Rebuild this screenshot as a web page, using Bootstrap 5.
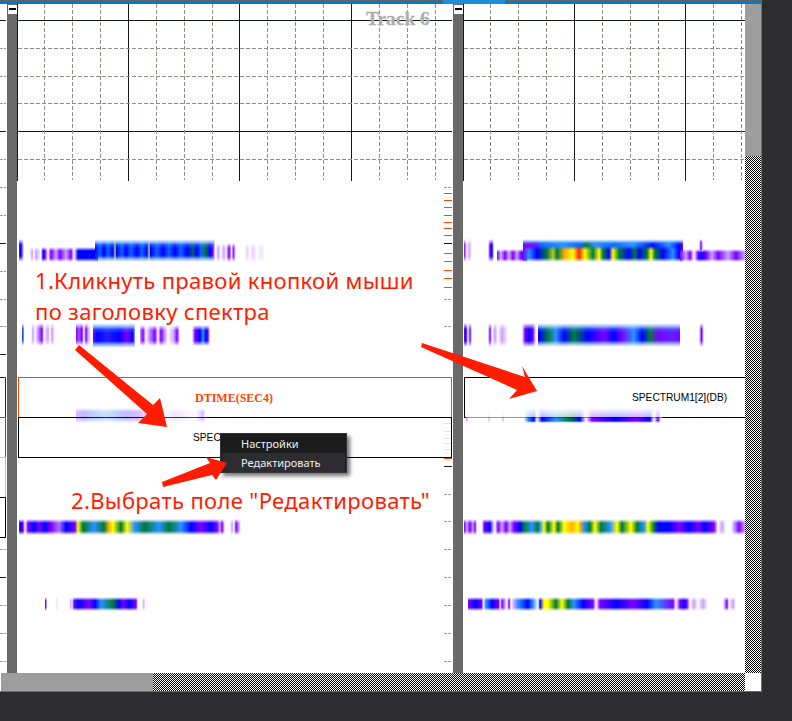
<!DOCTYPE html>
<html lang="en">
<head>
    <meta charset="UTF-8">
    <meta name="viewport" content="width=device-width, initial-scale=1.0">
    <title>Track 6</title>
    <link href="https://cdn.jsdelivr.net/npm/bootstrap@5.3.0/dist/css/bootstrap.min.css" rel="stylesheet">
    <style>
        :root {
            --p: #7a00ff;
            --b: #0000ff;
            --c: #2a90ff;
            --g: #007a3a;
            --y: #ffff00;
            --o: #ffb000;
            --l: #c9a0ff;
        }
        body {
            background: #2d2d30;
            margin: 0;
            min-height: 100vh;
            overflow: hidden;
        }
        .app-window {
            width: 762px;
            height: 692px;
            background: #fff;
            border-right: 1px solid #6d6d70;
            border-bottom: 1px solid #6d6d70;
        }
        .top-strip {
            height: 4px;
            border-top: 1px solid #5f6468;
            background: #007acc;
        }
        .top-strip-tab {
            margin-left: 443px;
            margin-top: -1px;
            width: 62px;
            height: 4px;
            background: #1c8fdc;
        }
        .work-row { height: 669px; }
        .edge-strip { width: 7px; }
        .splitter {
            width: 10px;
            background: #696969;
        }
        .collapse-btn {
            width: 9px;
            height: 9px;
            margin: 1px 0 0 1px;
            background: #fff;
            padding: 3px 1px;
        }
        .collapse-btn span {
            display: block;
            height: 2px;
            background: #000;
        }
        .pane-one { width: 436px; }
        .pane-two { width: 282px; }
        .canvas-svg {
            position: absolute;
            left: 0;
            top: 0;
            display: block;
        }
        .line-solid { stroke: #141a14; stroke-width: 1; fill: none; shape-rendering: crispEdges; }
        .line-dash { stroke: #8b908b; stroke-width: 1; fill: none; stroke-dasharray: 4 2; shape-rendering: crispEdges; }
        .line-tick { stroke: #9a9a9a; stroke-width: 1; fill: none; stroke-dasharray: 3 1; shape-rendering: crispEdges; }
        .line-red { stroke: #ff4500; stroke-width: 1; fill: none; shape-rendering: crispEdges; }
        .line-pale { stroke: #ffd8c8; stroke-width: 1; fill: none; shape-rendering: crispEdges; }
        .track-title {
            position: absolute;
            left: 349px;
            top: 3px;
            font: bold 19.4px/24px "Liberation Serif", serif;
            color: #aeaeae;
            -webkit-text-stroke: .3px #aeaeae;
        }
        /* spectrum bands: position on the plot is the content itself */
        .band {
            position: absolute;
            -webkit-mask-image: linear-gradient(180deg, transparent, #000 26%, #000 74%, transparent);
            mask-image: linear-gradient(180deg, transparent, #000 26%, #000 74%, transparent);
        }
        .band-edge::after {
            content: "";
            position: absolute;
            inset: 0;
            background: linear-gradient(180deg, rgba(70, 170, 255, .9), rgba(70, 170, 255, 0) 42%, rgba(70, 170, 255, 0) 68%, rgba(70, 170, 255, .75));
        }
        .header-stack { padding-top: 373px; position: relative; }
        .spec-head {
            height: 41px;
            margin-bottom: -1px;
            background: transparent;
            border: 1px solid #000;
            font: 10.2px/1 "Liberation Sans", sans-serif;
            color: #000;
            padding-top: 1px;
        }
        .pane-one .spec-head { margin-left: 1px; margin-right: 1px; }
        .pane-two .spec-head { margin-left: 1px; border-right: 0; padding-left: 167px; }
        .spec-head-active {
            border-color: #ff4500;
            border-bottom-color: #000;
            color: #ff4500;
            font: bold 12px/1 "Liberation Serif", serif;
            padding-right: 2px;
        }
        .spec-head-plain { padding-left: 174px; }
        .scroll-thumb { background: #9e9e9e; }
        .scroll-track {
            background: repeating-conic-gradient(#000 0 25%, #fff 0 50%) 0 0 / 2px 2px;
        }
        .v-scroll { width: 16px; }
        .v-thumb { height: 152px; }
        .h-scroll { height: 18px; }
        .h-thumb { width: 152px; margin-left: 1px; }
        .scroll-corner { width: 16px; background: #fff; }
        .hint-text {
            position: absolute;
            font: 22px/31px "Noto Sans", sans-serif;
            color: #ff1c00;
            white-space: nowrap;
            margin: 0;
        }
        .hint-one { left: 35px; top: 265px; letter-spacing: .32px; }
        .hint-two { left: 71px; top: 485px; letter-spacing: .35px; }
        .arrow-layer {
            position: absolute;
            left: 0;
            top: 0;
            z-index: 1060;
            pointer-events: none;
        }
        .arrow-layer polygon { fill: #ff1c00; }
        .menu-ctx {
            --bs-dropdown-min-width: 0;
            left: 220px;
            top: 433px;
            width: 127px;
            padding: 0 1px;
            background: #1b1b1c;
            border: 1px solid #333337;
            border-radius: 0;
            box-shadow: 3px 3px 4px rgba(0, 0, 0, .55);
            font: 11px/19px "Noto Sans", sans-serif;
        }
        .menu-ctx .dropdown-item {
            padding: 0 0 0 19px;
            height: 19px;
            color: #f1f1f1;
        }
        .menu-ctx .dropdown-item.active {
            background: #2d2d30;
            color: #f1f1f1;
        }
        .b1 { left: 19px; top: 239px; width: 5px; height: 23px; background: linear-gradient(90deg, var(--p), var(--b) 40%, #fff); }
        .b2 { left: 28px; top: 247px; width: 70px; height: 15px; background: linear-gradient(90deg, #fff 2px, var(--l) 4px, #fff 6px, var(--l) 8px, #fff 13px, var(--b) 15px, var(--p) 17px, #fff 20px, var(--p) 23px, var(--l) 28px, var(--p) 32px, var(--l) 38px, var(--p) 43px, #fff 46px, var(--b) 50px, var(--b) 70px); }
        .b3 { left: 95px; top: 239px; width: 120px; height: 23px; background: linear-gradient(90deg, var(--b), #1060ff 5px, var(--b) 9px, #1060ff 13px, var(--b) 18px, #70a070 19.5px, #d8e040 20px, var(--b) 21.5px, #1060ff 27px, var(--b) 31px, #1060ff 36px, var(--b) 42px, #1060ff 47px, var(--b) 52px, #70a070 53.5px, #d8e040 54px, var(--b) 55.5px, #1060ff 62px, var(--b) 68px, #1060ff 74px, var(--b) 80px, #1060ff 86px, var(--b) 92px, #005a80 98px, var(--b) 102px, #1060ff 106px, var(--g) 110px, var(--b) 115px, var(--p) 118px, #fff); }
        .b4 { left: 215px; top: 243px; width: 55px; height: 19px; background: linear-gradient(90deg, #fff 1px, var(--l) 3px, #fff 6px, var(--l) 9px, #fff 11px, var(--p) 14px, #fff 17px, var(--p) 18px, #fff 21px, #fff 30px, #e4d0ff 32px, #fff 35px, #e4d0ff 38px, #fff 42px, #efe4ff 46px, #fff 50px); }
        .b5 { left: 22px; top: 323px; width: 40px; height: 23px; background: linear-gradient(90deg, var(--c), var(--b) 1px, #fff 2px, #fff 9px, var(--l) 11px, #fff 13px, var(--p) 20px, #fff 22px, var(--l) 26px, #fff 28px, var(--l) 30px, #fff 33px, #fff 40px); }
        .b6 { left: 76px; top: 323px; width: 15px; height: 23px; background: linear-gradient(90deg, var(--p), #a050ff 3px, var(--p) 6px, #fff 8px, var(--p) 10px, var(--l) 12px, #fff 15px); }
        .b7 { left: 93px; top: 323px; width: 42px; height: 25px; background: linear-gradient(90deg, var(--p), var(--b) 4px, #2020ff 14px, var(--b) 26px, var(--p) 34px, var(--b) 40px, var(--l)); }
        .b8 { left: 140px; top: 325px; width: 70px; height: 21px; background: linear-gradient(90deg, var(--l), var(--p) 3px, #fff 6px, var(--l) 9px, var(--p) 15px, #fff 18px, var(--p) 21px, var(--l) 25px, #fff 28px, var(--l) 34px, var(--p) 37px, #fff 40px, #fff 52px, var(--p) 55px, var(--b) 60px, var(--c) 63px, var(--b) 66px, var(--p) 68px, #fff); }
        .b9 { left: 76px; top: 408px; width: 130px; height: 15px; opacity: .25; background: linear-gradient(90deg, var(--p), var(--b) 8px, var(--c) 30px, var(--b) 50px, var(--p) 64px, #fff 85px, var(--l) 100px, #fff 120px, var(--p) 127px, #fff 130px); }
        .b10 { left: 19px; top: 519px; width: 222px; height: 16px; background: linear-gradient(90deg, var(--p), var(--b) 2px, var(--p) 4px, #fff 6px, var(--p) 9px, var(--b) 15px, var(--p) 20px, var(--b) 26px, var(--p) 32px, #b070ff 40px, var(--b) 47px, var(--p) 56px, var(--y) 59px, var(--g) 64px, var(--c) 75px, var(--g) 85px, var(--o) 90px, var(--y) 94px, var(--g) 102px, var(--y) 108px, var(--c) 116px, var(--g) 126px, var(--c) 140px, var(--g) 150px, var(--c) 162px, var(--b) 172px, var(--p) 182px, var(--b) 192px, var(--p) 198px, var(--l) 201px, var(--p) 203px, #fff 206px, #fff 211px, var(--l) 213px, #fff 215px, var(--p) 217px, var(--l) 220px, #fff); }
        .b11 { left: 45px; top: 597px; width: 101px; height: 14px; background: linear-gradient(90deg, var(--p) 1px, #fff 2px, #fff 11px, #e4d0ff 12px, #fff 13px, #fff 24px, var(--l) 26px, #fff 27px, var(--p) 29px, var(--b) 33px, var(--p) 44px, var(--b) 50px, var(--c) 56px, var(--g) 68px, var(--b) 74px, var(--p) 78px, var(--b) 84px, var(--p) 91px, #fff 93px, #fff 97px, var(--l) 99px, #fff 100px); }
        /* right track, first band is built from stems, an upper and a lower layer */
        .b12a { left: 464px; top: 239px; width: 60px; height: 23px; background: linear-gradient(90deg, var(--p), #fff 3px, var(--l) 5px, #fff 8px, #fff 24px, var(--p) 26px, var(--b) 28px, #fff 30px, #fff 60px); }
        .b12b { left: 497px; top: 249px; width: 30px; height: 13px; background: linear-gradient(90deg, var(--p), #d0b0ff 4px, var(--p) 8px, #d0b0ff 12px, var(--p) 16px, var(--l) 20px, var(--p) 24px, var(--b) 30px); }
        .b12c { left: 523px; top: 239px; width: 160px; height: 16px; background: linear-gradient(90deg, var(--p), var(--p) 12px, #1060ff 18px, var(--c) 40px, #1060ff 56px, var(--g) 64px, var(--c) 72px, #1060ff 90px, var(--c) 110px, var(--b) 130px, var(--c) 146px, var(--b) 156px, var(--p)); }
        .b12d { left: 523px; top: 246px; width: 160px; height: 16px; background: linear-gradient(90deg, var(--p), var(--c) 6px, var(--b) 14px, var(--g) 24px, #b8c820 30px, var(--g) 34px, var(--o) 42px, var(--y) 50px, #ff2400 56px, var(--y) 62px, var(--g) 70px, var(--y) 76px, var(--g) 80px, var(--b) 86px, var(--y) 90px, var(--g) 96px, var(--b) 106px, var(--g) 112px, var(--b) 116px, var(--g) 124px, var(--y) 128px, var(--g) 132px, var(--b) 140px, var(--c) 150px, var(--b) 156px, var(--p)); }
        .b12e { left: 680px; top: 249px; width: 65px; height: 13px; background: linear-gradient(90deg, var(--p), var(--l) 6px, var(--p) 10px, #fff 14px, var(--p) 18px, var(--b) 21px, var(--p) 26px, var(--l) 32px, var(--p) 38px, var(--l) 48px, var(--p) 56px, var(--l) 65px); }
        .b12f { left: 699px; top: 239px; width: 4px; height: 14px; background: linear-gradient(90deg, #fff, var(--p), #fff); }
        .b13a { left: 464px; top: 323px; width: 74px; height: 24px; background: linear-gradient(90deg, var(--p), var(--b) 2px, #fff 4px, var(--p) 6px, #fff 8px, #fff 24px, var(--p) 26px, #fff 28px, var(--l) 31px, #fff 34px, var(--l) 38px, #fff 44px, #fff 58px, var(--p) 61px, var(--b) 65px, var(--p) 69px, #fff 72px); }
        .b13b { left: 538px; top: 323px; width: 142px; height: 24px; background: linear-gradient(90deg, var(--b) 2px, var(--g) 10px, var(--c) 18px, var(--b) 26px, var(--g) 36px, var(--b) 50px, var(--p) 66px, var(--b) 76px, var(--p) 84px, var(--c) 96px, var(--b) 104px, var(--g) 112px, var(--p) 120px, #6020ff 134px, var(--p) 142px); }
        .b13c { left: 699px; top: 323px; width: 5px; height: 24px; background: linear-gradient(90deg, #fff, var(--p), #fff); }
        .b14 { left: 466px; top: 408px; width: 196px; height: 15px; -webkit-mask-image: linear-gradient(180deg, transparent, rgba(0, 0, 0, .2) 40%, rgba(0, 0, 0, .3) 60%, #000 68%, #000 85%, transparent); mask-image: linear-gradient(180deg, transparent, rgba(0, 0, 0, .2) 40%, rgba(0, 0, 0, .3) 60%, #000 68%, #000 85%, transparent); background: linear-gradient(90deg, var(--l), #fff 3px, #fff 22px, var(--l) 23px, #fff 24px, #fff 36px, var(--l) 37px, #fff 38px, #fff 58px, var(--c) 62px, var(--b) 68px, #fff 71px, var(--b) 76px, var(--c) 90px, var(--g) 104px, var(--b) 114px, #fff 120px, var(--p) 126px, var(--b) 150px, var(--p) 170px, var(--b) 184px, #fff 188px, var(--p) 192px, #fff 195px); }
        .b15 { left: 464px; top: 519px; width: 281px; height: 16px; background: linear-gradient(90deg, var(--p), var(--l) 3px, var(--p) 6px, var(--l) 9px, var(--p) 11px, #fff 13px, #fff 18px, var(--p) 20px, var(--b) 26px, var(--l) 29px, #fff 31px, var(--p) 34px, var(--l) 38px, var(--p) 42px, var(--l) 46px, var(--p) 50px, var(--b) 56px, var(--g) 60px, var(--c) 68px, var(--g) 74px, var(--c) 76px, var(--y) 80px, var(--g) 84px, var(--y) 90px, var(--g) 94px, var(--y) 100px, var(--o) 108px, var(--y) 114px, var(--o) 116px, var(--c) 120px, var(--g) 126px, var(--y) 131px, var(--g) 137px, var(--c) 146px, var(--y) 153px, var(--g) 158px, var(--y) 167px, var(--g) 173px, var(--c) 180px, var(--y) 184px, var(--g) 190px, var(--b) 194px, var(--b) 205px, var(--p) 215px, var(--b) 225px, var(--p) 235px, var(--b) 240px, var(--p) 250px, #fff 254px, var(--l) 258px, #fff 262px, #fff 267px, var(--l) 270px, var(--p) 275px, var(--l) 281px); }
        .b16 { left: 468px; top: 597px; width: 268px; height: 14px; background: linear-gradient(90deg, var(--p), var(--b) 8px, var(--p) 14px, #fff 15px, var(--c) 18px, var(--b) 24px, var(--p) 31px, #fff 32px, var(--p) 34px, var(--l) 37px, #fff 39px, var(--p) 41px, #fff 43px, var(--l) 46px, var(--c) 50px, var(--b) 60px, var(--c) 65px, #fff 70px, var(--b) 72px, var(--y) 76px, var(--y) 80px, var(--g) 88px, var(--y) 94px, var(--g) 100px, var(--c) 106px, var(--b) 115px, var(--p) 125px, #fff 128px, var(--p) 132px, var(--b) 148px, var(--p) 165px, var(--b) 179px, var(--c) 188px, var(--p) 205px, #fff 208px, var(--p) 212px, var(--b) 216px, var(--p) 219px, #fff 222px, var(--l) 226px, #fff 230px, var(--l) 235px, #fff 240px, #fff 255px, var(--p) 259px, #fff 261px, var(--l) 265px, #fff 268px); }
    </style>
</head>
<body>
    <div class="app-window position-relative">
        <div class="top-strip"><div class="top-strip-tab"></div></div>

        <div class="work-row d-flex">
            <!-- left edge of the hidden track -->
            <div class="edge-strip position-relative">
                <svg class="canvas-svg" width="7" height="669" viewBox="0 4 7 669">
                    <path class="line-solid" d="M0 20.5H6M0 131.5H6M0 243.5H6M0 354.5H6M0 577.5H6"/>
                    <path class="line-tick" d="M0 48.5H6M0 76.5H6M0 103.5H6M0 159.5H6M0 187.5H6M0 215.5H6M0 271.5H6M0 299.5H6M0 326.5H6M0 549.5H6M0 605.5H6M0 633.5H6M0 661.5H6"/>
                    <path fill="none" stroke="#800000" d="M0 377.5H5.5V417"/>
                    <path fill="none" stroke="#008080" d="M0 417.5H5.5V457"/>
                    <path fill="none" stroke="#ffc000" d="M0 457.5H5.5V497"/>
                    <path fill="none" stroke="#000" d="M0 497.5H5.5V537.5H0"/>
                </svg>
            </div>

            <div class="splitter flex-shrink-0">
                <div class="collapse-btn"><span></span></div>
            </div>

            <div class="pane-one position-relative flex-shrink-0">
                <svg class="canvas-svg" width="436" height="669" viewBox="17 4 436 669">
                    <path class="line-solid" d="M17.5 4V181M128.5 4V181M239.5 4V181M351.5 4V181M18 20.5H452M18 131.5H452M444 243.5H452M444 466.5H452"/>
                    <path class="line-dash" d="M44.5 4V180M72.5 4V180M100.5 4V180M156.5 4V180M184.5 4V180M212.5 4V180M267.5 4V180M295.5 4V180M323.5 4V180M379.5 4V180M407.5 4V180M435.5 4V180M18 48.5H452M18 76.5H452M18 103.5H452M18 159.5H452"/>
                    <path class="line-tick" d="M444 187.5H452M444 299.5H452M444 326.5H452M444 494.5H452M444 521.5H452M444 549.5H452M444 577.5H452M444 605.5H452M444 633.5H452M444 661.5H452"/>
                    <path class="line-red" d="M444 193.5H452M444 200.5H452M444 207.5H452M444 215.5H452M444 222.5H452M444 228.5H452M444 235.5H452M444 253.5H452M444 261.5H452M444 270.5H452M444 278.5H452M444 287.5H452M444 458.5H452"/>
                    <path class="line-pale" d="M444 423.5H451M444 431.5H451M444 438.5H451M444 443.5H451M444 449.5H451"/>
                </svg>
                <div class="track-title">Track 6</div>
                <div class="header-stack">
                    <div class="spec-head spec-head-active d-flex align-items-center justify-content-center">DTIME(SEC4)</div>
                    <div class="spec-head spec-head-plain d-flex align-items-center">SPECT</div>
                </div>
            </div>

            <div class="splitter flex-shrink-0">
                <div class="collapse-btn"><span></span></div>
            </div>

            <div class="pane-two position-relative flex-shrink-0">
                <svg class="canvas-svg" width="282" height="669" viewBox="463 4 282 669">
                    <path class="line-solid" d="M463.5 4V181M574.5 4V181M685.5 4V181M464 20.5H745M464 131.5H745"/>
                    <path class="line-dash" d="M490.5 4V180M518.5 4V180M546.5 4V180M602.5 4V180M630.5 4V180M658.5 4V180M713.5 4V180M741.5 4V180M464 48.5H745M464 76.5H745M464 103.5H745M464 159.5H745"/>
                </svg>
                <div class="header-stack">
                    <div class="spec-head d-flex align-items-center">SPECTRUM1[2](DB)</div>
                </div>
            </div>

            <div class="v-scroll d-flex flex-column flex-shrink-0">
                <div class="v-thumb scroll-thumb"></div>
                <div class="scroll-track flex-grow-1"></div>
            </div>
        </div>

        <div class="h-scroll d-flex">
            <div class="h-thumb scroll-thumb flex-shrink-0"></div>
            <div class="scroll-track flex-grow-1"></div>
            <div class="scroll-corner flex-shrink-0"></div>
        </div>

        <!-- spectra -->
        <div class="band b1"></div><div class="band b2"></div><div class="band band-edge b3"></div><div class="band b4"></div>
        <div class="band b5"></div><div class="band b6"></div><div class="band band-edge b7"></div><div class="band b8"></div>
        <div class="band b9"></div><div class="band b10"></div><div class="band b11"></div>
        <div class="band b12a"></div><div class="band b12b"></div><div class="band band-edge b12c"></div><div class="band b12d"></div><div class="band b12e"></div><div class="band b12f"></div>
        <div class="band b13a"></div><div class="band band-edge b13b"></div><div class="band b13c"></div><div class="band b14"></div><div class="band b15"></div><div class="band b16"></div>

        <p class="hint-text hint-one">1.Кликнуть правой кнопкой мыши<br>по заголовку спектра</p>
        <p class="hint-text hint-two">2.Выбрать поле "Редактировать"</p>

        <div class="dropdown-menu show menu-ctx">
            <a class="dropdown-item" href="#">Настройки</a>
            <a class="dropdown-item active" href="#">Редактировать</a>
        </div>

        <svg class="arrow-layer" width="762" height="692" viewBox="0 0 762 692">
            <polygon points="75,350 79,345 153,405 160,398 167,427 138,423 147,414"/>
            <polygon points="421,347 422,343 525,377 522,366 537,391 509,399 517,390"/>
            <polygon points="162,482 210,463 206,457 227,463 216,480 212,475 163,487"/>
        </svg>
    </div>

    <script src="https://cdn.jsdelivr.net/npm/bootstrap@5.3.0/dist/js/bootstrap.bundle.min.js"></script>
</body>
</html>
